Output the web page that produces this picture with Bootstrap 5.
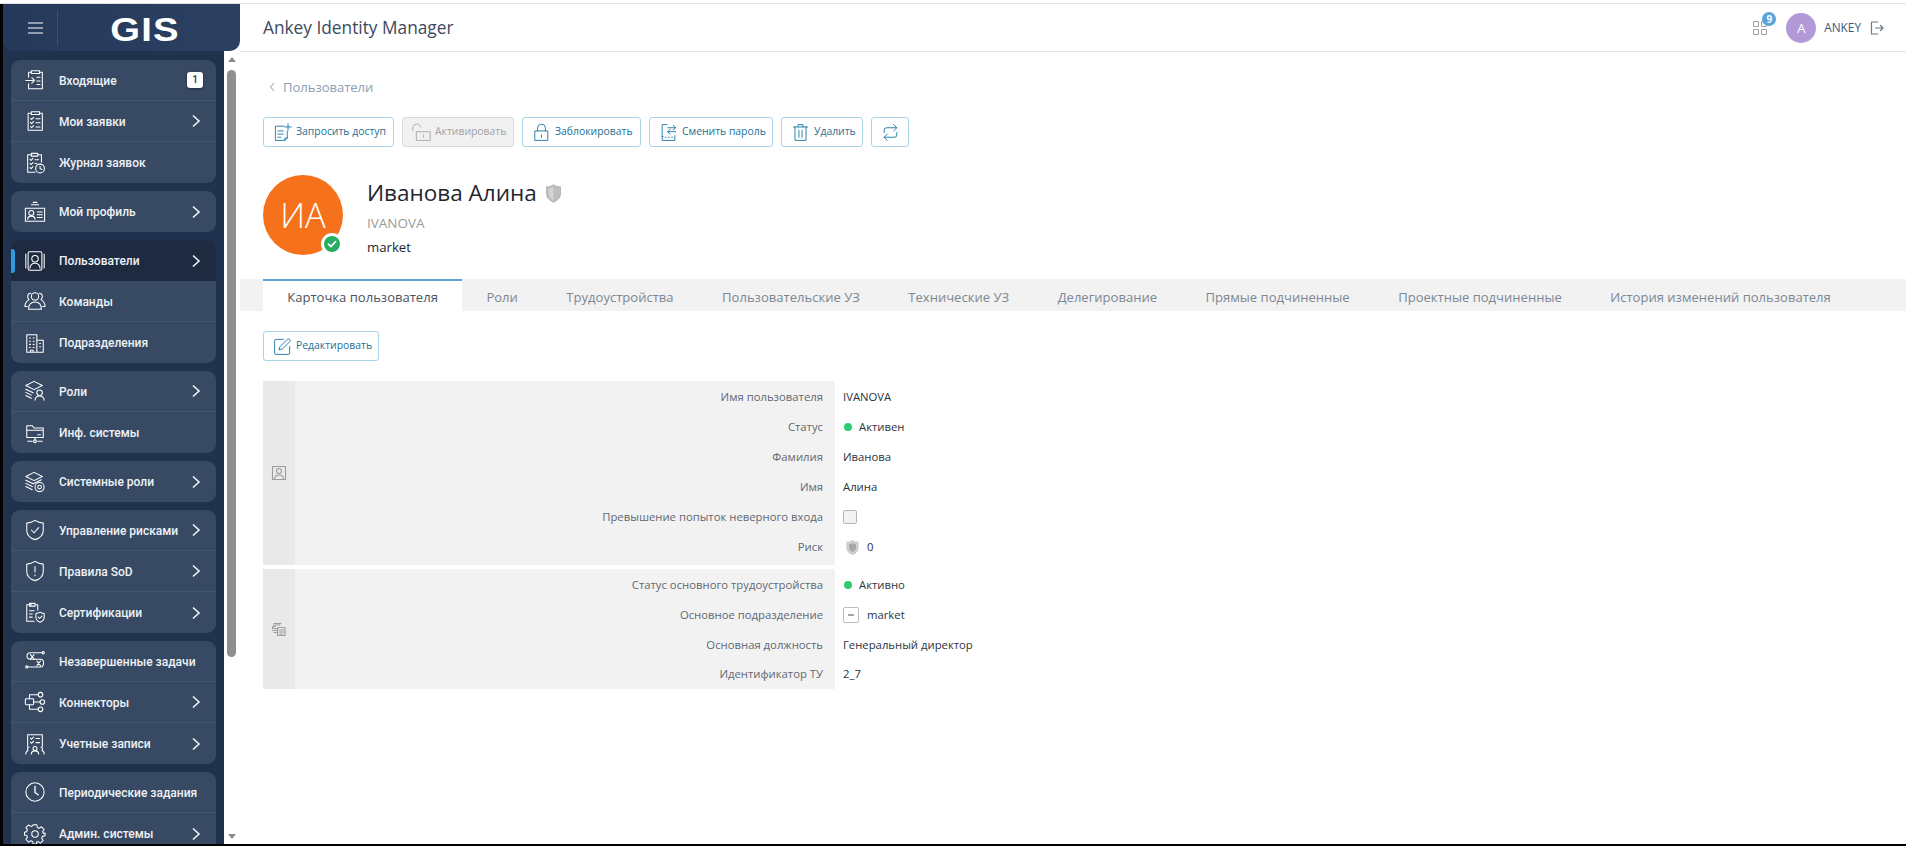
<!doctype html>
<html lang="ru">
<head>
<meta charset="utf-8">
<title>Ankey Identity Manager</title>
<link href="https://cdn.jsdelivr.net/npm/bootstrap@5.3.0/dist/css/bootstrap.min.css" rel="stylesheet">
<style>
html,body{height:846px;overflow:hidden;background:#fff;}
body{font-family:"Open Sans","Liberation Sans",sans-serif;font-size:11.3px;color:#3a4452;}
.app-frame{height:846px;border-bottom:2px solid #000;overflow:hidden;}
.app-topline{height:4px;background:#fff;border-bottom:1px solid #e2e2e2;flex:none;}
.app-shell{height:842px;}
.side{width:240px;flex:none;border-left:3px solid #000;background:linear-gradient(90deg,#20324e 221px,#fff 221px);}
.side-head{height:47px;flex:none;background:linear-gradient(90deg,#26395a,#2b3f60);border-radius:0 0 10px 10px;}
.burger{width:55px;height:36px;border-right:1px solid #3b4d6b;padding-right:14px;}
.burger svg{display:block;}
.gis-logo{flex:1;text-align:center;padding:4px 7px 0 0;font-family:"Liberation Sans",sans-serif;font-weight:700;font-size:33px;letter-spacing:1px;color:#fff;line-height:1;transform:scaleX(1.16);}
.side-body{flex:1;min-height:0;}
.side-nav{width:221px;flex:none;background:#20324e;padding:9px 8px 0 8px;overflow:hidden;}
.side-group{background:#384a63;border-radius:9px;margin-bottom:8px;width:205px;overflow:hidden;}
.side-item{height:41px;padding:0 13px 0 13px;color:#eef2f6;font-family:Roboto,"Open Sans",sans-serif;font-weight:500;font-size:12px;border-bottom:1px solid #45566f;position:relative;gap:13px;text-decoration:none;}
.side-item:last-child{border-bottom:0;}
.side-item.is-active{background:#1e2a40;border-bottom:0;}
.side-item.is-active::before{content:"";position:absolute;left:0;top:9px;width:4px;height:24px;background:#2e9bdc;border-radius:0 3px 3px 0;}
.side-ic{width:22px;height:22px;flex:none;fill:none;stroke:#fff;stroke-width:1.15;stroke-linecap:round;stroke-linejoin:round;}
.side-txt{flex:1;white-space:nowrap;margin-top:1px;}
.side-chev{width:10px;height:14px;flex:none;fill:none;stroke:#f1f4f7;stroke-width:1.6;margin-right:2px;}
.side-count{width:16px;height:16px;background:#fff;color:#2d3c54;border-radius:3px;font-size:10px;font-weight:600;text-align:center;line-height:16px;box-shadow:0 1px 3px rgba(0,0,0,.4);}
.scroll-col{width:16px;flex:none;background:#fff;position:relative;}
.scroll-up,.scroll-down{position:absolute;left:4px;width:0;height:0;border-left:4px solid transparent;border-right:4px solid transparent;}
.scroll-up{top:6px;border-bottom:5px solid #8c8c8c;}
.scroll-down{bottom:7px;border-top:5px solid #8c8c8c;}
.scroll-thumb{position:absolute;left:3px;top:19px;width:9px;height:587px;background:#8f8f8f;border-radius:5px;}
.main-col{flex:1;min-width:0;background:#fff;}
.main-head{height:48px;flex:none;border-bottom:1px solid #e2e2e2;padding:0 22px 0 23px;}
.main-title{font-size:17.300px;color:#3c4a5c;}
.apps-wrap{position:relative;width:14px;height:14px;margin-right:19px;margin-top:1px;}
.apps-wrap svg{display:block;fill:none;stroke:#a3a3a3;stroke-width:1;}
.apps-badge{position:absolute;left:9px;top:-9px;width:14px;height:14px;border-radius:50%;background:#58a5dc;color:#fff;font-size:10px;font-weight:700;line-height:14px;text-align:center;}
.user-ava{width:30px;height:30px;border-radius:50%;background:#b39ad6;color:#fff;font-size:13px;line-height:30px;text-align:center;margin-right:8px;}
.user-name{font-size:11.8px;color:#39587c;margin-right:9px;}
.logout-ic{width:14px;height:14px;fill:none;stroke:#6c7887;stroke-width:1.2;stroke-linecap:round;stroke-linejoin:round;}
.main-body{flex:1;}
.crumb{padding:26px 0 0 29px;height:55px;color:#8c9db2;font-size:13px;line-height:18px;gap:7px;}
.crumb svg{width:7px;height:10px;fill:none;stroke:#8c9db2;stroke-width:1;}
.act-bar{padding:10px 0 0 23px;gap:8px;height:40px;}
.act-btn{height:30px;border:1px solid #a9d3e8;border-radius:3px;background:#fff;color:#1e6f96;font-size:10.400px;padding:0 0 0 9px;gap:4px;white-space:nowrap;}
.act-btn svg{width:19px;height:19px;flex:none;fill:none;stroke:#1b77a3;stroke-width:1.15;stroke-linecap:round;stroke-linejoin:round;}
.act-btn.is-off{background:#f1f1f1;border-color:#d9d9d9;color:#a2a2a2;}
.act-btn.is-off svg{stroke:#a8a8a8;}
.act-btn.is-only{width:38px;padding:0;justify-content:center;}
.bw-req{width:131px;}
.bw-act{width:112px;}
.bw-lock{width:119px;}
.bw-pass{width:124px;}
.bw-del{width:82px;}
.bw-edit{width:116px;}
.person-row{padding:28px 0 0 23px;height:132px;}
.ava-big{width:80px;height:80px;border-radius:50%;background:#f5711b;color:#fff;font-size:34.500px;font-weight:300;line-height:80px;text-align:center;position:relative;margin-right:24px;flex:none;}
.ava-ok{position:absolute;left:58px;top:58px;width:22px;height:22px;border-radius:50%;background:#27ae60;border:3px solid #fff;}
.ava-ok svg{display:block;fill:none;stroke:#fff;stroke-width:1.8;stroke-linecap:round;stroke-linejoin:round;}
.person-name{font-size:22.500px;color:#1f2630;line-height:30px;margin-top:3px;gap:8px;}
.person-name svg{width:17px;height:19px;}
.person-login{color:#9a9a9a;font-size:13.500px;line-height:18px;margin-top:6px;}
.person-dep{color:#23282f;font-size:13.200px;line-height:18px;margin-top:6px;}
.tabs-bar{height:32px;background:#f2f2f2;padding-left:23px;border:0;flex-wrap:nowrap;}
.tab-link{display:block;height:32px;padding:6px 24.25px 0;color:#7c8794;font-size:13.050px;line-height:20px;white-space:nowrap;text-decoration:none;border-top:2px solid transparent;}
.tab-link.is-on{background:#fff;border-top-color:#5aa5d8;color:#4a5461;}
.edit-wrap{padding:20px 0 0 23px;height:70px;}
.facts{width:572px;margin-left:23px;}
.fact-sec{background:#f2f2f2;}
.fact-sec + .fact-sec{margin-top:4px;}
.fact-rows-top{padding:1px 0 3px;}
.fact-rows-low{padding-top:1px;}
.fact-rows-low .fact-line:last-child{height:29px;}
.fact-ic{width:32px;flex:none;background:#e9e9e9;}
.fact-ic svg{width:16px;height:16px;fill:none;stroke:#9c9c9c;stroke-width:1.1;stroke-linecap:round;stroke-linejoin:round;}
.fact-line{height:30px;position:relative;}
.fact-key{flex:1;text-align:right;padding-right:12px;color:#5f6873;white-space:nowrap;}
.fact-val{width:236px;flex:none;margin-right:-236px;white-space:nowrap;color:#2c3440;gap:7px;height:30px;transform:translateX(8px);}
.fact-dot{width:8px;height:8px;border-radius:50%;background:#2ecc71;margin-left:1px;}
.fact-check{width:14px;height:14px;background:#f2f3f5;border:1px solid #b3b7bc;border-radius:2px;}
.fact-tree{width:16px;height:16px;border:1px solid #b9bdc2;border-radius:2px;background:#fff;position:relative;margin-right:1px;}
.fact-tree::after{content:"";position:absolute;left:4px;top:6px;width:6px;height:2px;background:#a6a6a6;}
.fact-shield{width:13px;height:15px;margin:0 1px 0 3px;}
</style>
</head>
<body>
<svg width="0" height="0" class="position-absolute">
<defs>
<symbol id="i-in" viewBox="0 0 24 24"><path d="M7 3.500H5V9M5 16v5.500h15v-18h-2M8 2h9v3H8zM2 12.500h9M8.500 9.500l3 3-3 3M14 9h3.500M14 13h3.500M14 17h3.500"/></symbol>
<symbol id="i-my" viewBox="0 0 24 24"><path d="M7 3.500H4.500v18.500h15.500V3.500H18M8 2h9v3H8zM7 9l1.300 1.300L10.500 8M7 13.500l1.300 1.300 2.200-2.300M7 18l1.300 1.300 2.200-2.300M13 9.500h4.500M13 14h4.500M13 18.500h4.500"/></symbol>
<symbol id="i-log" viewBox="0 0 24 24"><path d="M7 3H4v19h8M16 3h3v8M8 1.500h7v3H8zM6.500 8l1.200 1.200L9.800 7M6.500 12.500l1.200 1.200 2.100-2.200M6.500 17l1.200 1.200 2.100-2.200M12 8.500h4M12 12.500h2"/><circle cx="17.500" cy="18" r="4.800"/><path d="M17.500 15.500V18l2 1"/></symbol>
<symbol id="i-card" viewBox="0 0 24 24"><path d="M1.500 8h21v14h-21zM8 4h8M10 1.500h4"/><circle cx="8" cy="13" r="2.700"/><path d="M4 20c0-3 1.500-3.500 4-3.500s4 .5 4 3.500M14.500 12H20M14.500 15H20M14.500 18H20"/></symbol>
<symbol id="i-user" viewBox="0 0 24 24"><path d="M6 2h12a1.500 1.500 0 0 1 1.500 1.500v17A1.500 1.500 0 0 1 18 22H6a1.500 1.500 0 0 1-1.500-1.500v-17A1.500 1.500 0 0 1 6 2zM2 4.500v15M22 4.500v15"/><circle cx="12" cy="9.500" r="3.500"/><path d="M6.500 20c.3-4 2.500-5.500 5.500-5.500s5.200 1.500 5.500 5.500"/></symbol>
<symbol id="i-team" viewBox="0 0 24 24"><circle cx="12" cy="7" r="4"/><path d="M5 21c0-5.500 2.500-8 7-8s7 2.500 7 8zM7.500 3.500C5 3.500 4 5.500 4 7c0 1.500.5 2.500 1.500 3.500C3 12 1 14.500 1 18h2.500M16.500 3.500C19 3.500 20 5.500 20 7c0 1.500-.5 2.500-1.500 3.500 2.500 1.500 4.500 4 4.500 7.500h-2.500"/></symbol>
<symbol id="i-dept" viewBox="0 0 24 24"><path d="M3 22V3h11v19zM14 9h7v13h-7M6 6.500h1M10 6.500h1M6 10h1M10 10h1M6 13.500h1M10 13.500h1M6 17h1M10 17h1M17 12.500h1M17 16h1M7 22v-2h3v2"/></symbol>
<symbol id="i-role" viewBox="0 0 24 24"><path d="M11 1.500l9 4.500-9 4.500L2 6zM2 10l8 4M2 13.500l6 3M2 17l6 3"/><circle cx="17" cy="14" r="3"/><path d="M12 22c.3-3 2-4.500 5-4.500s4.700 1.500 5 4.500"/></symbol>
<symbol id="i-sys" viewBox="0 0 24 24"><path d="M3 17V4h6l2 2.500h10V17zM3 9h18M12 17v3M4 21h5M15 21h5M15 14h3"/><circle cx="12" cy="21" r="1.500"/></symbol>
<symbol id="i-srole" viewBox="0 0 24 24"><path d="M11 1.500l9 4.500-9 4.500L2 6zM2 10l8 4 9-4.500M2 13.500l7 3.500M2 17l7 3.500"/><circle cx="17" cy="17.500" r="5"/><circle cx="17" cy="17.500" r="2"/></symbol>
<symbol id="i-shield" viewBox="0 0 24 24"><path d="M12 1.500c3 2 5.500 2.800 9 3v8c0 5-4 8.500-9 10-5-1.500-9-5-9-10v-8c3.500-.2 6-1 9-3zM8 12l3 3 5-5.500"/></symbol>
<symbol id="i-sod" viewBox="0 0 24 24"><path d="M12 1.500c3 2 5.500 2.800 9 3v8c0 5-4 8.500-9 10-5-1.500-9-5-9-10v-8c3.500-.2 6-1 9-3zM12 7v6M12 16v1.200"/></symbol>
<symbol id="i-cert" viewBox="0 0 24 24"><path d="M8 3H3v18h8M13 3h2v6M6 1.500h6v3H6zM6 9.500h5M6 13h3M6 16.500h3"/><path d="M17.500 11c1.500 1 2.700 1.300 4.500 1.500v4c0 2.700-2 4.500-4.500 5.500-2.500-1-4.500-2.800-4.500-5.500v-4c1.800-.2 3-.5 4.500-1.500zM15.500 16.500l1.500 1.500 2.500-2.700"/></symbol>
<symbol id="i-task" viewBox="0 0 24 24"><path d="M20 3H7c-5 0-5 7 0 7h11c4.500 0 4.500 8 0 8.500H4"/><circle cx="21" cy="3" r="1.200"/><circle cx="3" cy="18.500" r="1.200"/><path d="M7 5l4 5M11 5l-4 5M14 12l4 5M18 12l-4 5"/></symbol>
<symbol id="i-conn" viewBox="0 0 24 24"><rect x="1.500" y="8.500" width="9" height="6.500" rx="1"/><circle cx="18" cy="4" r="2.500"/><circle cx="20" cy="12" r="2.500"/><circle cx="18" cy="20" r="2.500"/><path d="M10.500 12h7M6 8.500V4h9.500M6 15v5h9.500"/></symbol>
<symbol id="i-acc" viewBox="0 0 24 24"><path d="M4 15V2h16v13M7 5.500l1.200 1.200L10.500 4.500M7 10l1.200 1.200 2.300-2.200M13 6h4M13 10.500h4"/><circle cx="12" cy="17" r="2.200"/><path d="M8 23c0-2.500 1.500-3.500 4-3.500s4 1 4 3.500M5.500 15.500a2 2 0 0 0-1 3.500C3 19.500 2 21 2 23M18.500 15.500a2 2 0 0 1 1 3.500c1.500.5 2.500 2 2.500 4"/></symbol>
<symbol id="i-clock" viewBox="0 0 24 24"><circle cx="12" cy="12" r="10"/><path d="M12 6v6.500l3.500 2.500" stroke-width="1.500"/></symbol>
<symbol id="i-gear" viewBox="0 0 24 24"><circle cx="12" cy="12" r="3.500"/><path d="M10 2h4l.6 2.900 1.900.8 2.500-1.600 2.900 2.900-1.600 2.500.8 1.900L23 11v3l-2.900.6-.8 1.900 1.600 2.500-2.900 2.900-2.500-1.600-1.900.8L14 23h-4l-.6-2.900-1.900-.8L5 20.900 2.100 18l1.600-2.500-.8-1.900L.5 13v-3l2.400-.6.8-1.900L2.100 5 5 2.100l2.500 1.600 1.900-.8z"/></symbol>
<symbol id="i-chev" viewBox="0 0 10 14"><path d="M2 1.500L8 7l-6 5.500"/></symbol>
</defs>
</svg>
<div class="app-frame d-flex flex-column">
<div class="app-topline"></div>
<div class="app-shell d-flex">
  <aside class="side d-flex flex-column">
    <div class="side-head d-flex align-items-center">
      <div class="burger d-flex align-items-center justify-content-end"><svg width="15" height="12" viewBox="0 0 15 12" fill="none" stroke="#fff" stroke-width="1"><path d="M0 1h15M0 6h15M0 11h15"/></svg></div>
      <div class="gis-logo">GIS</div>
    </div>
    <div class="side-body d-flex overflow-hidden">
      <nav class="side-nav">
        <div class="side-group">
          <a class="side-item d-flex align-items-center"><svg class="side-ic"><use href="#i-in"/></svg><span class="side-txt">Входящие</span><span class="side-count">1</span></a>
          <a class="side-item d-flex align-items-center"><svg class="side-ic"><use href="#i-my"/></svg><span class="side-txt">Мои заявки</span><svg class="side-chev"><use href="#i-chev"/></svg></a>
          <a class="side-item d-flex align-items-center"><svg class="side-ic"><use href="#i-log"/></svg><span class="side-txt">Журнал заявок</span></a>
        </div>
        <div class="side-group">
          <a class="side-item d-flex align-items-center"><svg class="side-ic"><use href="#i-card"/></svg><span class="side-txt">Мой профиль</span><svg class="side-chev"><use href="#i-chev"/></svg></a>
        </div>
        <div class="side-group">
          <a class="side-item is-active d-flex align-items-center"><svg class="side-ic"><use href="#i-user"/></svg><span class="side-txt">Пользователи</span><svg class="side-chev"><use href="#i-chev"/></svg></a>
          <a class="side-item d-flex align-items-center"><svg class="side-ic"><use href="#i-team"/></svg><span class="side-txt">Команды</span></a>
          <a class="side-item d-flex align-items-center"><svg class="side-ic"><use href="#i-dept"/></svg><span class="side-txt">Подразделения</span></a>
        </div>
        <div class="side-group">
          <a class="side-item d-flex align-items-center"><svg class="side-ic"><use href="#i-role"/></svg><span class="side-txt">Роли</span><svg class="side-chev"><use href="#i-chev"/></svg></a>
          <a class="side-item d-flex align-items-center"><svg class="side-ic"><use href="#i-sys"/></svg><span class="side-txt">Инф. системы</span></a>
        </div>
        <div class="side-group">
          <a class="side-item d-flex align-items-center"><svg class="side-ic"><use href="#i-srole"/></svg><span class="side-txt">Системные роли</span><svg class="side-chev"><use href="#i-chev"/></svg></a>
        </div>
        <div class="side-group">
          <a class="side-item d-flex align-items-center"><svg class="side-ic"><use href="#i-shield"/></svg><span class="side-txt">Управление рисками</span><svg class="side-chev"><use href="#i-chev"/></svg></a>
          <a class="side-item d-flex align-items-center"><svg class="side-ic"><use href="#i-sod"/></svg><span class="side-txt">Правила SoD</span><svg class="side-chev"><use href="#i-chev"/></svg></a>
          <a class="side-item d-flex align-items-center"><svg class="side-ic"><use href="#i-cert"/></svg><span class="side-txt">Сертификации</span><svg class="side-chev"><use href="#i-chev"/></svg></a>
        </div>
        <div class="side-group">
          <a class="side-item d-flex align-items-center"><svg class="side-ic"><use href="#i-task"/></svg><span class="side-txt">Незавершенные задачи</span></a>
          <a class="side-item d-flex align-items-center"><svg class="side-ic"><use href="#i-conn"/></svg><span class="side-txt">Коннекторы</span><svg class="side-chev"><use href="#i-chev"/></svg></a>
          <a class="side-item d-flex align-items-center"><svg class="side-ic"><use href="#i-acc"/></svg><span class="side-txt">Учетные записи</span><svg class="side-chev"><use href="#i-chev"/></svg></a>
        </div>
        <div class="side-group">
          <a class="side-item d-flex align-items-center"><svg class="side-ic"><use href="#i-clock"/></svg><span class="side-txt">Периодические задания</span></a>
          <a class="side-item d-flex align-items-center"><svg class="side-ic"><use href="#i-gear"/></svg><span class="side-txt">Админ. системы</span><svg class="side-chev"><use href="#i-chev"/></svg></a>
        </div>
      </nav>
      <div class="scroll-col"><span class="scroll-up"></span><span class="scroll-thumb"></span><span class="scroll-down"></span></div>
    </div>
  </aside>
  <main class="main-col d-flex flex-column">
    <header class="main-head d-flex align-items-center">
      <div class="main-title flex-grow-1">Ankey Identity Manager</div>
      <div class="apps-wrap"><svg width="14" height="14" viewBox="0 0 14 14"><path d="M.5.500h5v5h-5zM8.500.500h5v5h-5zM.5 8.500h5v5h-5zM8.500 8.500h5v5h-5z"/></svg><span class="apps-badge">9</span></div>
      <div class="user-ava">A</div>
      <div class="user-name">ANKEY</div>
      <svg class="logout-ic" viewBox="0 0 14 14"><path d="M8 1H1.500v12H8M5.500 7H13M10.500 4.500L13 7l-2.500 2.500"/></svg>
    </header>
    <div class="main-body">
      <div class="crumb d-flex align-items-start"><svg class="mt-1" viewBox="0 0 7 10"><path d="M5 1L1.500 5 5 9"/></svg><span>Пользователи</span></div>
      <div class="act-bar d-flex">
        <button class="btn act-btn bw-req d-flex align-items-center" type="button"><svg viewBox="0 0 24 24"><path d="M14 4H3v18h12l3-3V10M6 10h7M6 14h7M6 18h4M15 22v-3h3M19 1v8M15 5h8"/></svg>Запросить доступ</button>
        <button class="btn act-btn bw-act is-off d-flex align-items-center" type="button"><svg viewBox="0 0 24 24"><path d="M1 10V6.500a5 5 0 0 1 9.800-1.500M6 11h17v11H6zM14.500 15v3"/></svg>Активировать</button>
        <button class="btn act-btn bw-lock d-flex align-items-center" type="button"><svg viewBox="0 0 24 24"><path d="M7 10V6.500a5 5 0 0 1 10 0V10M4 10h16v12H4zM12 15v3"/></svg>Заблокировать</button>
        <button class="btn act-btn bw-pass d-flex align-items-center" type="button"><svg viewBox="0 0 24 24"><path d="M10 2H4v20h16V16M4 17h1M8 18h1M12 18h1M16 18h1M11 6h10M18 3l3 3-3 3M21 11H11M14 8l-3 3 3 3"/></svg>Сменить пароль</button>
        <button class="btn act-btn bw-del d-flex align-items-center" type="button"><svg viewBox="0 0 24 24"><path d="M3 5h18M9 5V2h6v3M5 5v17h14V5M10 9v9M14 9v9"/></svg>Удалить</button>
        <button class="btn act-btn is-only d-flex align-items-center" type="button"><svg viewBox="0 0 24 24"><path d="M4 12V9a3 3 0 0 1 3-3h13M16 2l4 4-4 4M20 12v3a3 3 0 0 1-3 3H4M8 14l-4 4 4 4"/></svg></button>
      </div>
      <div class="person-row d-flex">
        <div class="ava-big">ИА<span class="ava-ok"><svg width="16" height="16" viewBox="0 0 16 16"><path d="M4.500 8.200l2.500 2.300 4.500-4.800"/></svg></span></div>
        <div>
          <div class="person-name d-flex align-items-center">Иванова Алина<svg viewBox="0 0 24 27"><path fill="#bdbdbd" stroke="#a8a8a8" d="M12 1c3 2 6 3 10 3v10c0 6-5 10-10 12C7 24 2 20 2 14V4c4 0 7-1 10-3z"/><path fill="#d2d2d2" d="M12 4v19c-4-2-7-5-7-9V6.500c3 0 5-1 7-2.500z"/></svg></div>
          <div class="person-login">IVANOVA</div>
          <div class="person-dep">market</div>
        </div>
      </div>
      <ul class="nav tabs-bar">
        <li class="nav-item"><a class="tab-link is-on">Карточка пользователя</a></li>
        <li class="nav-item"><a class="tab-link">Роли</a></li>
        <li class="nav-item"><a class="tab-link">Трудоустройства</a></li>
        <li class="nav-item"><a class="tab-link">Пользовательские УЗ</a></li>
        <li class="nav-item"><a class="tab-link">Технические УЗ</a></li>
        <li class="nav-item"><a class="tab-link">Делегирование</a></li>
        <li class="nav-item"><a class="tab-link">Прямые подчиненные</a></li>
        <li class="nav-item"><a class="tab-link">Проектные подчиненные</a></li>
        <li class="nav-item"><a class="tab-link">История изменений пользователя</a></li>
      </ul>
      <div class="edit-wrap"><button class="btn act-btn bw-edit d-inline-flex align-items-center" type="button"><svg viewBox="0 0 24 24"><path d="M13 3H4a2 2 0 0 0-2 2v15a2 2 0 0 0 2 2h15a2 2 0 0 0 2-2v-8M9 12l9-9a2 2 0 0 1 3 3l-9 9-4 1z"/></svg>Редактировать</button></div>
      <div class="facts">
        <section class="fact-sec d-flex">
          <div class="fact-ic d-flex align-items-center justify-content-center"><svg viewBox="0 0 16 16"><path d="M1.500 1.500h13v13h-13z"/><circle cx="8" cy="6" r="2.500"/><path d="M3.500 14c.3-2.800 2-4 4.500-4s4.200 1.200 4.500 4"/></svg></div>
          <div class="flex-grow-1 fact-rows-top">
            <div class="fact-line d-flex align-items-center"><div class="fact-key">Имя пользователя</div><div class="fact-val d-flex align-items-center">IVANOVA</div></div>
            <div class="fact-line d-flex align-items-center"><div class="fact-key">Статус</div><div class="fact-val d-flex align-items-center"><span class="fact-dot"></span>Активен</div></div>
            <div class="fact-line d-flex align-items-center"><div class="fact-key">Фамилия</div><div class="fact-val d-flex align-items-center">Иванова</div></div>
            <div class="fact-line d-flex align-items-center"><div class="fact-key">Имя</div><div class="fact-val d-flex align-items-center">Алина</div></div>
            <div class="fact-line d-flex align-items-center"><div class="fact-key">Превышение попыток неверного входа</div><div class="fact-val d-flex align-items-center"><span class="fact-check"></span></div></div>
            <div class="fact-line d-flex align-items-center"><div class="fact-key">Риск</div><div class="fact-val d-flex align-items-center"><svg class="fact-shield" viewBox="0 0 24 27"><path fill="#d4d4d4" stroke="#c4c4c4" stroke-width="2" d="M12 1c3 2 6 3 10 3v10c0 6-5 10-10 12C7 24 2 20 2 14V4c4 0 7-1 10-3z"/><path fill="#a8a8a8" d="M12 5c2 1.500 4 2 6.500 2v7c0 4-3 6.500-6.500 8-3.500-1.500-6.500-4-6.500-8V7C8 7 10 6.500 12 5z"/></svg>0</div></div>
          </div>
        </section>
        <section class="fact-sec d-flex">
          <div class="fact-ic d-flex align-items-center justify-content-center"><svg viewBox="0 0 16 16"><path d="M7.500 6.500h6.500v8H6.500v-7zM8.500 9h4M8.500 11h4M8.500 13h3M9 4H2.500M10 2.500H3M4.500 5.500H1.500v2h5M1.500 9.500h5M3 11.500h3"/></svg></div>
          <div class="flex-grow-1 fact-rows-low">
            <div class="fact-line d-flex align-items-center"><div class="fact-key">Статус основного трудоустройства</div><div class="fact-val d-flex align-items-center"><span class="fact-dot"></span>Активно</div></div>
            <div class="fact-line d-flex align-items-center"><div class="fact-key">Основное подразделение</div><div class="fact-val d-flex align-items-center"><span class="fact-tree"></span>market</div></div>
            <div class="fact-line d-flex align-items-center"><div class="fact-key">Основная должность</div><div class="fact-val d-flex align-items-center">Генеральный директор</div></div>
            <div class="fact-line d-flex align-items-center"><div class="fact-key">Идентификатор ТУ</div><div class="fact-val d-flex align-items-center">2_7</div></div>
          </div>
        </section>
      </div>
    </div>
  </main>
</div>
</div>
</body>
</html>
